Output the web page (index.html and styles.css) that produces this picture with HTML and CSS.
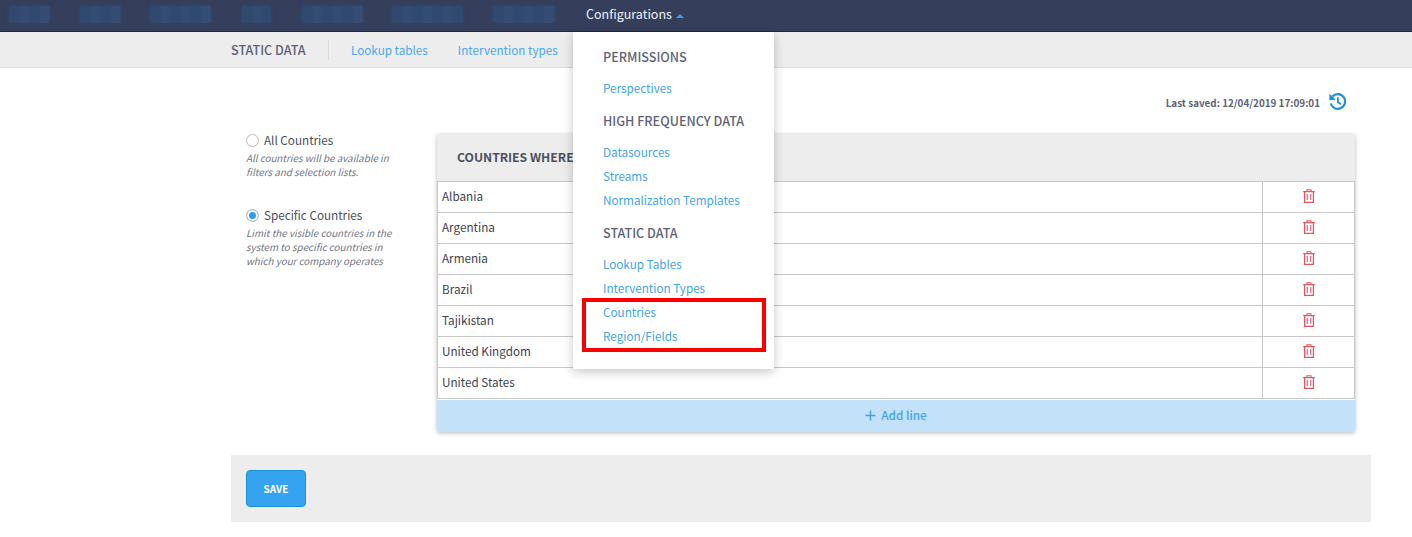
FILE: index.html
```html
<!DOCTYPE html>
<html lang="en">
<head>
<meta charset="utf-8">
<title>Countries</title>
<link rel="stylesheet" href="styles.css">
</head>
<body>
<svg class="defs" width="0" height="0" aria-hidden="true"><symbol id="trash" viewBox="0 0 12 14"><path d="M4 2.200V.8h4V2.200" fill="none" stroke="#e2575b" stroke-width="1.100"/><path d="M.2 2.600h11.600M1.600 2.700V13.400H10.400V2.700" fill="none" stroke="#e2575b" stroke-width="1.300"/><path d="M4.300 5V11M7.700 5V11" fill="none" stroke="#dd7f9a" stroke-width="1.500"/></symbol></svg>
<header class="topbar">
  <div class="blur b1"></div><div class="blur b2"></div><div class="blur b3"></div><div class="blur b4"></div><div class="blur b5"></div><div class="blur b6"></div><div class="blur b7"></div>
  <div class="config">Configurations <span class="caret"></span></div>
</header>
<nav class="subbar">
  <span class="subtitle">STATIC DATA</span>
  <span class="subsep"></span>
  <a class="sublink">Lookup tables</a>
  <a class="sublink">Intervention types</a>
</nav>
<div class="menu">
  <h4 class="menu-h first">PERMISSIONS</h4>
  <a class="menu-a">Perspectives</a>
  <h4 class="menu-h">HIGH FREQUENCY DATA</h4>
  <a class="menu-a">Datasources</a>
  <a class="menu-a">Streams</a>
  <a class="menu-a">Normalization Templates</a>
  <h4 class="menu-h">STATIC DATA</h4>
  <a class="menu-a">Lookup Tables</a>
  <a class="menu-a">Intervention Types</a>
  <a class="menu-a">Countries</a>
  <a class="menu-a">Region/Fields</a>
</div>
<div class="highlight"></div>
<main class="page">
  <div class="saved">
    <span class="saved-text">Last saved: 12/04/2019 17:09:01</span>
    <svg class="history" viewBox="0 0 17 17" width="17" height="17"><path d="M3.400 3.600A7.300 7.300 0 1 1 1.800 10.500" fill="none" stroke="#1a93d3" stroke-width="2.200"/><path d="M0.400 0.800 6.800 6.700 0.400 7.200Z" fill="#1a93d3"/><path d="M8.900 4.300V9.300L12 11.300" fill="none" stroke="#1a93d3" stroke-width="1.800"/></svg>
  </div>
  <div class="content">
    <aside class="options">
      <div class="option">
        <div class="opt-label"><span class="radio"></span>All Countries</div>
        <p class="opt-help">All countries will be available in filters and selection lists.</p>
      </div>
      <div class="option">
        <div class="opt-label"><span class="radio on"></span>Specific Countries</div>
        <p class="opt-help">Limit the visible countries in the system to specific countries in which your company operates</p>
      </div>
    </aside>
    <section class="panel">
      <div class="panel-head">COUNTRIES WHERE</div>
      <div class="rows">
        <div class="row"><div class="name">Albania</div><div class="act"><svg class="trash" width="12" height="14"><use href="#trash"/></svg></div></div>
        <div class="row"><div class="name">Argentina</div><div class="act"><svg class="trash" width="12" height="14"><use href="#trash"/></svg></div></div>
        <div class="row"><div class="name">Armenia</div><div class="act"><svg class="trash" width="12" height="14"><use href="#trash"/></svg></div></div>
        <div class="row"><div class="name">Brazil</div><div class="act"><svg class="trash" width="12" height="14"><use href="#trash"/></svg></div></div>
        <div class="row"><div class="name">Tajikistan</div><div class="act"><svg class="trash" width="12" height="14"><use href="#trash"/></svg></div></div>
        <div class="row"><div class="name">United Kingdom</div><div class="act"><svg class="trash" width="12" height="14"><use href="#trash"/></svg></div></div>
        <div class="row"><div class="name">United States</div><div class="act"><svg class="trash" width="12" height="14"><use href="#trash"/></svg></div></div>
      </div>
      <div class="addline"><svg viewBox="0 0 11 11" width="11" height="11"><path d="M5.500 0.500V10.500M0.500 5.500H10.500" stroke="#3fa4ee" stroke-width="1.500" fill="none"/></svg><span>Add line</span></div>
    </section>
  </div>
  <div class="footer"><button class="save">SAVE</button></div>
</main>
</body>
</html>
```
FILE: styles.css
```css
* { box-sizing: border-box; }
html, body { margin: 0; padding: 0; }
body {
  font-family: "Noto Sans CJK SC", "Noto Sans", sans-serif;
  font-size: 11.700px;
  line-height: 20px;
  color: #4a4f5c;
  background: #fff;
  width: 1412px;
  height: 537px;
  overflow: hidden;
  position: relative;
}
.defs { position: absolute; }
.topbar {
  height: 32px;
  background: #353f5b;
  border-bottom: 1px solid #20283d;
  display: flex;
  align-items: center;
  padding-left: 9px;
}
.blur {
  height: 17px;
  margin-top: -2px;
  background: repeating-linear-gradient(90deg, #30496f 0 11px, #364b72 11px 20px);
  box-shadow: 0 0 5px #37456a;
}
.b1 { width: 41px; margin-right: 30px; }
.b2 { width: 41px; margin-right: 29px; }
.b3 { width: 61px; margin-right: 31px; }
.b4 { width: 29px; margin-right: 31px; }
.b5 { width: 61px; margin-right: 29px; }
.b6 { width: 71px; margin-right: 30px; }
.b7 { width: 62px; margin-right: 31px; }
.config { color: #f0f2f5; font-size: 12.500px; margin-top: -3px; white-space: nowrap; }
.caret {
  display: inline-block;
  width: 0; height: 0;
  margin-left: 1px;
  vertical-align: 1px;
  border-left: 4px solid transparent;
  border-right: 4px solid transparent;
  border-bottom: 4px solid #3fa4ee;
}
.subbar {
  height: 36px;
  background: #ededed;
  border-bottom: 1px solid #dcdcdc;
  display: flex;
  align-items: center;
  padding-left: 231px;
}
.subtitle { font-size: 12.600px; font-weight: 500; color: #5d6376; width: 97px; }
.subsep { width: 1px; height: 20px; background: #dadada; margin-right: 22px; }
.sublink { color: #4aa8ee; margin-right: 30px; }
.menu {
  position: absolute;
  left: 573px;
  top: 32px;
  width: 201px;
  height: 337px;
  background: #fff;
  box-shadow: 0 3px 10px rgba(0,0,0,.22);
  padding: 15px 0 0 30px;
  z-index: 5;
}
.menu-h {
  margin: 9px 0 0;
  font-size: 12.600px;
  font-weight: 500;
  color: #5d6376;
  line-height: 20px;
  height: 31px;
}
.menu-h.first { margin-top: 0; }
.menu-a { display: block; color: #3fa4ee; line-height: 20px; height: 24px; }
.highlight {
  position: absolute;
  left: 582px;
  top: 298px;
  width: 184px;
  height: 54px;
  border: 4px solid #fc0000;
  z-index: 6;
}
.page { width: 1140px; margin-left: 231px; }
.saved {
  height: 66px;
  display: flex;
  justify-content: flex-end;
  align-items: flex-start;
  padding: 25px 25px 0 0;
}
.saved-text { font-size: 9.900px; font-weight: 700; color: #5d6376; margin-right: 9px; }
.history { display: block; }
.content { display: flex; height: 321px; }
.options { width: 206px; padding-left: 15px; margin-top: -3px; }
.option { height: 75px; }
.opt-label { color: #4a4f5c; display: flex; align-items: center; height: 18px; margin-bottom: 2px; }
.radio {
  width: 13px; height: 13px;
  border: 1px solid #bcbcbc;
  border-radius: 50%;
  margin-right: 5px;
  background: #fff;
}
.radio.on { box-shadow: inset 0 0 0 2px #fff; background: #2f9bec; }
.opt-help { margin: 0; font-size: 9.800px; line-height: 14px; font-style: italic; color: #6f7484; width: 150px; }
.panel {
  width: 918px;
  height: 298px;
  background: #fff;
  box-shadow: 0 1px 4px rgba(0,0,0,.28);
  border-radius: 2px;
  overflow: hidden;
}
.panel-head {
  height: 47px;
  background: #ededed;
  padding: 13px 0 0 20px;
  font-weight: 700;
  font-size: 12.200px;
  color: #4a5060;
}
.rows { border: 1px solid #c8c8c8; border-top: 0; border-bottom: 0; }
.row { display: flex; height: 31px; border-top: 1px solid #c8c8c8; }
.row:last-child { height: 32px; border-bottom: 1px solid #c8c8c8; }
.name { flex: 1; padding: 4px 0 0 4px; color: #3d4250; }
.act { width: 92px; border-left: 1px solid #c8c8c8; display: flex; justify-content: center; align-items: center; padding-bottom: 2px; }
.trash { display: block; }
.addline {
  height: 32px;
  margin-top: 1px;
  background: #c3e2f9;
  color: #3fa4ee;
  font-weight: 500;
  display: flex;
  justify-content: center;
  align-items: center;
  gap: 5px;
  padding-bottom: 2px;
}
.footer { height: 67px; background: #ededed; padding: 15px 0 0 15px; }
.save {
  width: 60px; height: 37px;
  background: #36a3f0;
  border: 1px solid #1a93d3;
  border-radius: 4px;
  color: #fff;
  font-family: inherit;
  font-size: 10px;
  font-weight: 700;
  padding: 0;
}
```
